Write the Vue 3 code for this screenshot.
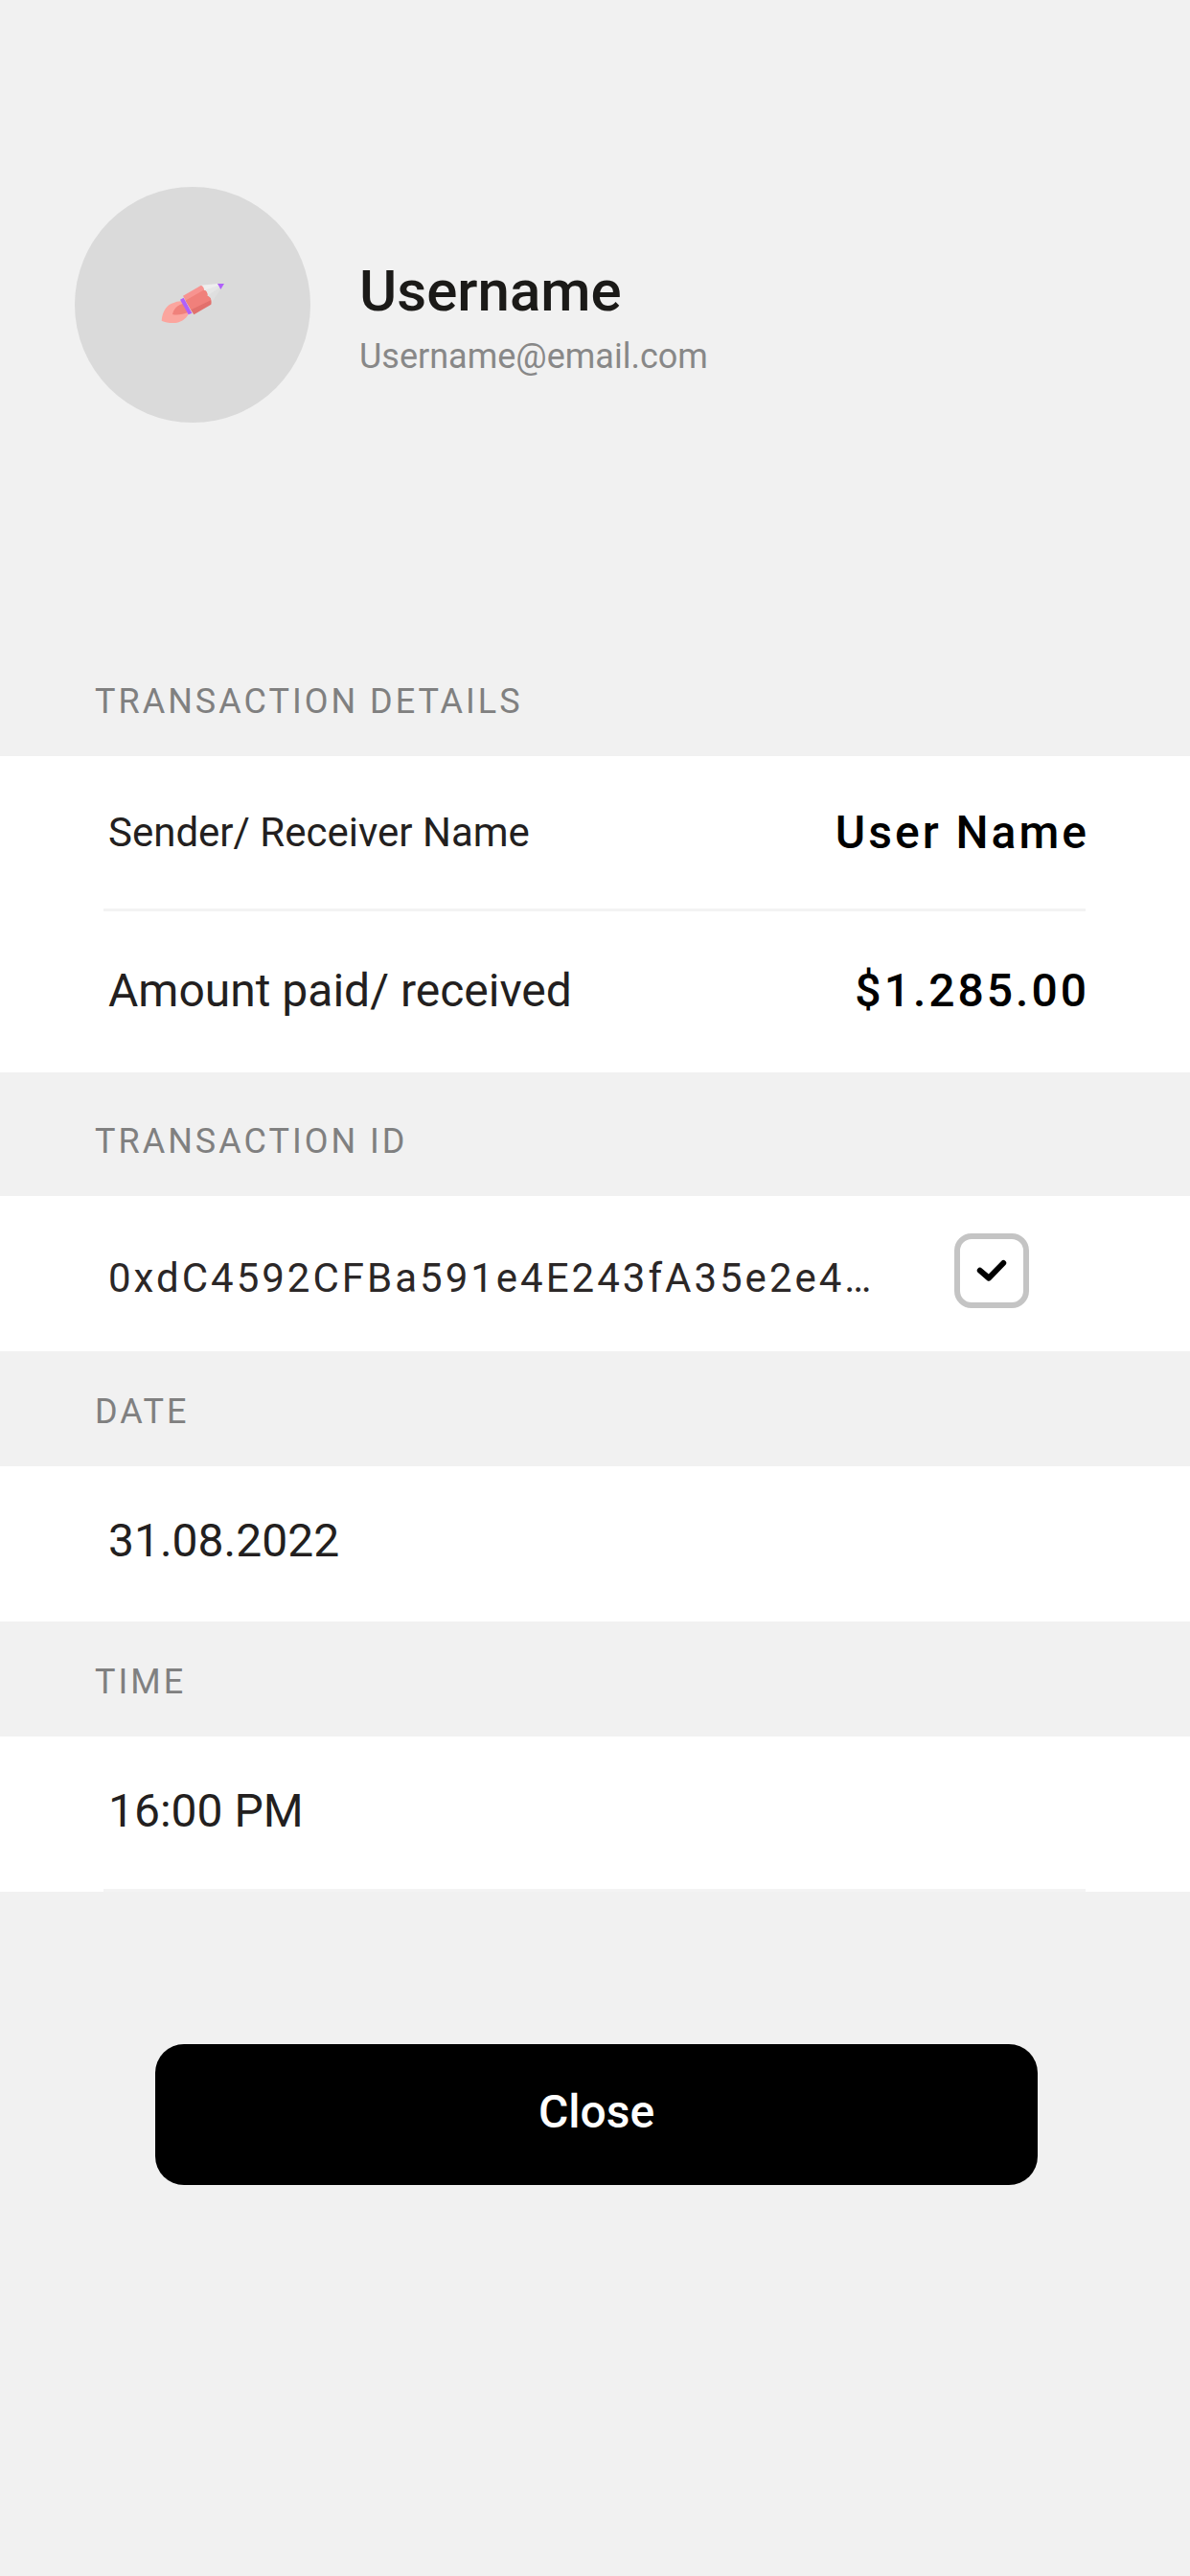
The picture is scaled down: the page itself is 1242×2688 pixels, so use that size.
<script setup>
import { ref } from 'vue'

const verified = ref(true)
</script>

<template>
  <main class="page">
    <header class="profile">
      <div class="avatar">
        <svg class="rocket" viewBox="54 75 198 138" aria-hidden="true">
          <path fill="#fba59e" d="M56 194C58 165 72 142 96 137C107 133 116 133 119 133L140 173C132 189 114 201 92 201C78 201 66 199 56 194Z" />
          <path fill="#f0817b" d="M90 174C94 154 108 145 123 141L138 168C124 174 104 178 90 174Z" />
          <path fill="#eeeeee" d="M178 83L232 78L239 88L188 102Z" />
          <path fill="#e6e6e6" d="M187 99L236 83L240 93L199 122Z" />
          <path fill="#dfdfdf" d="M196 118L238 90L242 94L213 136L205 132Z" />
          <path fill="#f79390" d="M123 116L180 83C186 86 190 92 189 100L132 133Z" />
          <path fill="#f0807b" d="M131 131L188 98C197 100 201 108 199 118L148 160Z" />
          <path fill="#e2706c" d="M147 159L186 125L199 117C208 119 214 128 211 143L157 175Z" />
          <path fill="#f0807b" d="M131 131L188 98C197 100 201 108 199 118C207 118 212 126 210 130L148 160Z" />
          <path fill="#b060fa" d="M231 78H252L241 96Z" />
          <path fill="#b060fa" d="M114 128L125 122L151 170L140 175Z" />
        </svg>
      </div>
      <div class="identity">
        <h1 class="name">Username</h1>
        <p class="email">Username@email.com</p>
      </div>
    </header>

    <section>
      <h2 class="heading">TRANSACTION DETAILS</h2>
      <div class="panel">
        <div class="row row-party">
          <span class="label-small">Sender/ Receiver Name</span>
          <strong class="value">User Name</strong>
        </div>
        <div class="row row-amount">
          <span class="text">Amount paid/ received</span>
          <strong class="value">$1.285.00</strong>
        </div>
      </div>
    </section>

    <section>
      <h2 class="heading heading-tall">TRANSACTION ID</h2>
      <div class="panel">
        <div class="row row-id">
          <label class="hash" for="verified">0xdC4592CFBa591e4E243fA35e2e4…</label>
          <span class="check">
            <input id="verified" v-model="verified" class="box" type="checkbox" />
            <svg v-if="verified" class="tick" viewBox="0 0 78 78" aria-hidden="true">
              <path d="M26.8 38.8L36 46.6L51.2 31" />
            </svg>
          </span>
        </div>
      </div>
    </section>

    <section>
      <h2 class="heading">DATE</h2>
      <div class="panel">
        <div class="row"><span class="text">31.08.2022</span></div>
      </div>
    </section>

    <section>
      <h2 class="heading">TIME</h2>
      <div class="panel">
        <div class="row row-last"><span class="text">16:00 PM</span></div>
      </div>
    </section>

    <footer class="actions">
      <button class="close" type="button">Close</button>
    </footer>
  </main>
</template>

<style>
body {
  margin: 0;
  background: #f1f1f1;
}
</style>

<style scoped>
.page {
  box-sizing: border-box;
  min-height: 100vh;
  background: #f1f1f1;
  color: #231f20;
  font-family: Roboto, "Liberation Sans", sans-serif;
}

.profile {
  display: flex;
  align-items: center;
  gap: 51px;
  padding: 195px 78px 228px;
}

.avatar {
  display: flex;
  align-items: center;
  justify-content: center;
  flex: none;
  width: 246px;
  height: 246px;
  border-radius: 50%;
  background: #dadada;
}

.rocket {
  width: 66px;
  height: 46px;
}

.identity {
  display: flex;
  flex-direction: column;
  gap: 12px;
  padding-top: 26px;
}

.name {
  margin: 0;
  color: #1b1a18;
  font-size: 60px;
  font-weight: 500;
  line-height: 70px;
}

.email {
  margin: 0;
  color: #888;
  font-size: 36px;
  line-height: 42px;
}

.heading {
  margin: 0;
  padding: 42px 99px 36px;
  color: #808080;
  font-size: 36px;
  font-weight: 400;
  line-height: 42px;
  letter-spacing: 3px;
}

.heading-tall {
  padding-top: 51px;
}

.panel {
  padding: 0 109px 0 108px;
  background: #fff;
}

.row {
  display: flex;
  align-items: center;
  justify-content: space-between;
  box-sizing: border-box;
  min-height: 162px;
  padding: 0 0 6px 5px;
}

.row-party {
  padding-bottom: 0;
  border-bottom: 3px solid #f3f3f3;
}

.row-amount {
  min-height: 168px;
  padding-bottom: 3px;
}

.row-id {
  align-items: flex-end;
  padding-right: 59px;
  padding-bottom: 45px;
}

.row-last {
  padding-bottom: 3px;
  border-bottom: 3px solid #f3f3f3;
}

.label-small {
  font-size: 42px;
  line-height: 56px;
}

.text {
  font-size: 48px;
  line-height: 56px;
}

.value {
  margin-right: -4px;
  color: #000;
  font-size: 48px;
  font-weight: 500;
  line-height: 56px;
  letter-spacing: 3px;
}

.hash {
  color: #2b2727;
  font-size: 42px;
  line-height: 62px;
  letter-spacing: 3px;
}

.check {
  position: relative;
  flex: none;
  width: 78px;
  height: 78px;
}

.box {
  display: block;
  appearance: none;
  box-sizing: border-box;
  width: 100%;
  height: 100%;
  margin: 0;
  border: 6px solid #c4c4c4;
  border-radius: 18px;
  background: #fff;
}

.tick {
  position: absolute;
  inset: 0;
  fill: none;
  stroke: #000;
  stroke-width: 6;
  stroke-linecap: round;
  stroke-linejoin: round;
  pointer-events: none;
}

.actions {
  padding: 159px 159px 159px 162px;
}

.close {
  display: block;
  box-sizing: border-box;
  width: 100%;
  height: 147px;
  padding: 0 0 6px;
  border: 0;
  border-radius: 30px;
  background: #000;
  color: #fff;
  font-family: inherit;
  font-size: 48px;
  font-weight: 500;
  line-height: 56px;
}
</style>
